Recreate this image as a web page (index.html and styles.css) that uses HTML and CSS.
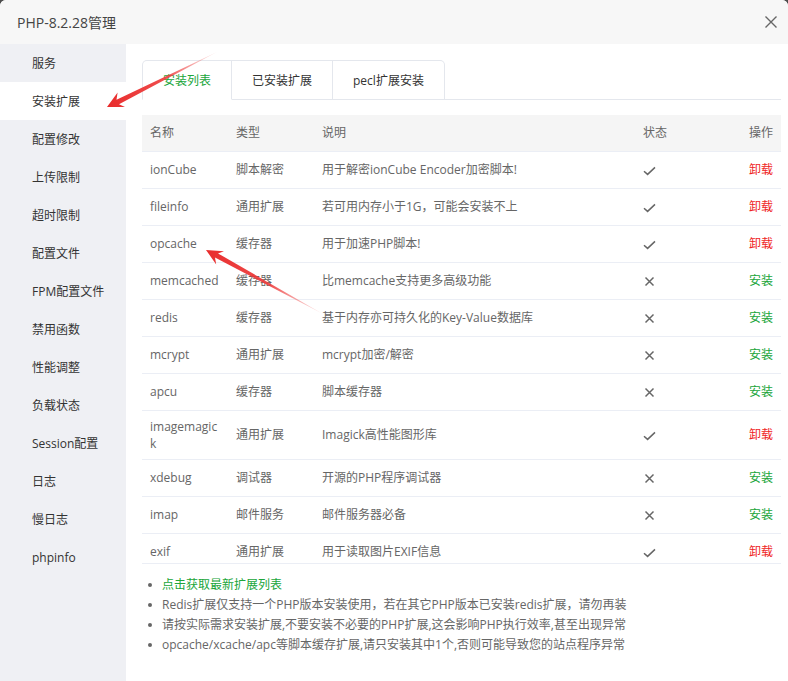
FILE: index.html
```html
<!DOCTYPE html>
<html lang="zh-CN">
<head>
<meta charset="utf-8">
<title>PHP-8.2.28管理</title>
<link rel="stylesheet" href="styles.css">
</head>
<body>
<div class="dialog">
  <header class="dlg-head">
    <span class="dlg-title">PHP-8.2.28管理</span>
    <button class="dlg-close" aria-label="关闭">
      <svg width="14" height="14" viewBox="0 0 14 14"><path d="M1.5 1.5 L12.5 12.5 M12.5 1.5 L1.5 12.5" stroke="#666" stroke-width="1.4" fill="none"/></svg>
    </button>
  </header>
  <div class="dlg-body">
    <nav class="side">
      <a class="side-item">服务</a>
      <a class="side-item active">安装扩展</a>
      <a class="side-item">配置修改</a>
      <a class="side-item">上传限制</a>
      <a class="side-item">超时限制</a>
      <a class="side-item">配置文件</a>
      <a class="side-item">FPM配置文件</a>
      <a class="side-item">禁用函数</a>
      <a class="side-item">性能调整</a>
      <a class="side-item">负载状态</a>
      <a class="side-item">Session配置</a>
      <a class="side-item">日志</a>
      <a class="side-item">慢日志</a>
      <a class="side-item">phpinfo</a>
    </nav>
    <main class="content">
      <div class="tabs">
        <span class="tab active">安装列表</span>
        <span class="tab">已安装扩展</span>
        <span class="tab">pecl扩展安装</span>
        <span class="tabs-fill"></span>
      </div>
      <div class="table-wrap">
        <table class="ext-table">
          <colgroup>
            <col class="c-name"><col class="c-type"><col class="c-desc"><col class="c-state"><col class="c-op">
          </colgroup>
          <thead>
            <tr><th>名称</th><th>类型</th><th>说明</th><th>状态</th><th class="op">操作</th></tr>
          </thead>
          <tbody>
            <tr><td>ionCube</td><td>脚本解密</td><td>用于解密ionCube Encoder加密脚本!</td><td><i class="ok"></i></td><td class="op"><a class="del">卸载</a></td></tr>
            <tr><td>fileinfo</td><td>通用扩展</td><td>若可用内存小于1G，可能会安装不上</td><td><i class="ok"></i></td><td class="op"><a class="del">卸载</a></td></tr>
            <tr><td>opcache</td><td>缓存器</td><td>用于加速PHP脚本!</td><td><i class="ok"></i></td><td class="op"><a class="del">卸载</a></td></tr>
            <tr><td>memcached</td><td>缓存器</td><td>比memcache支持更多高级功能</td><td><i class="no"></i></td><td class="op"><a class="add">安装</a></td></tr>
            <tr><td>redis</td><td>缓存器</td><td>基于内存亦可持久化的Key-Value数据库</td><td><i class="no"></i></td><td class="op"><a class="add">安装</a></td></tr>
            <tr><td>mcrypt</td><td>通用扩展</td><td>mcrypt加密/解密</td><td><i class="no"></i></td><td class="op"><a class="add">安装</a></td></tr>
            <tr><td>apcu</td><td>缓存器</td><td>脚本缓存器</td><td><i class="no"></i></td><td class="op"><a class="add">安装</a></td></tr>
            <tr><td>imagemagick</td><td>通用扩展</td><td>Imagick高性能图形库</td><td><i class="ok"></i></td><td class="op"><a class="del">卸载</a></td></tr>
            <tr><td>xdebug</td><td>调试器</td><td>开源的PHP程序调试器</td><td><i class="no"></i></td><td class="op"><a class="add">安装</a></td></tr>
            <tr><td>imap</td><td>邮件服务</td><td>邮件服务器必备</td><td><i class="no"></i></td><td class="op"><a class="add">安装</a></td></tr>
            <tr><td>exif</td><td>通用扩展</td><td>用于读取图片EXIF信息</td><td><i class="ok"></i></td><td class="op"><a class="del">卸载</a></td></tr>
          </tbody>
        </table>
      </div>
      <ul class="notes">
        <li class="link">点击获取最新扩展列表</li>
        <li>Redis扩展仅支持一个PHP版本安装使用，若在其它PHP版本已安装redis扩展，请勿再装</li>
        <li>请按实际需求安装扩展,不要安装不必要的PHP扩展,这会影响PHP执行效率,甚至出现异常</li>
        <li>opcache/xcache/apc等脚本缓存扩展,请只安装其中1个,否则可能导致您的站点程序异常</li>
      </ul>
    </main>
  </div>
  <!-- red annotation arrows drawn over the dialog -->
  <svg class="marks" width="788" height="681" viewBox="0 0 788 681">
    <defs>
      <linearGradient id="arrowA" gradientUnits="userSpaceOnUse" x1="217" y1="52" x2="107" y2="107">
        <stop offset="0" stop-color="#f07070" stop-opacity="0.15"/>
        <stop offset="0.45" stop-color="#ee3b3b" stop-opacity="0.9"/>
        <stop offset="1" stop-color="#e82c2c"/>
      </linearGradient>
      <linearGradient id="arrowB" gradientUnits="userSpaceOnUse" x1="323" y1="314" x2="206" y2="250">
        <stop offset="0" stop-color="#f07070" stop-opacity="0.15"/>
        <stop offset="0.45" stop-color="#ee3b3b" stop-opacity="0.9"/>
        <stop offset="1" stop-color="#e82c2c"/>
      </linearGradient>
    </defs>
    <polygon fill="url(#arrowA)" points="217,52 119.0,104.2 125.0,107.0 107,107 117.6,92.6 116.5,99.8"/>
    <polygon fill="url(#arrowB)" points="323,314 218.0,253.4 224.0,251.2 206,250 216.2,264.4 215.0,257.6"/>
  </svg>
</div>
</body>
</html>
```
FILE: styles.css
```css
* { box-sizing: border-box; }

html, body {
  margin: 0;
  height: 100%;
}

body {
  background: #4d4d4d;
  font-family: "Open Sans", "Noto Sans CJK SC", sans-serif;
  font-size: 12px;
  color: #666;
}

.dialog {
  position: relative;
  width: 788px;
  height: 681px;
  background: #fff;
  border-radius: 6px 6px 0 0;
  overflow: hidden;
  display: flex;
  flex-direction: column;
}

/* title bar */
.dlg-head {
  height: 44px;
  flex: none;
  display: flex;
  align-items: center;
  justify-content: space-between;
  padding: 0 10px 0 17px;
  background: #f7f7f7;
}

.dlg-title {
  font-size: 14px;
  color: #444;
}

.dlg-close {
  border: 0;
  background: none;
  padding: 0;
  width: 14px;
  height: 14px;
  display: flex;
}

.dlg-body {
  flex: 1;
  display: flex;
  min-height: 0;
}

/* left menu */
.side {
  width: 126px;
  flex: none;
  background: #eff0f4;
  display: flex;
  flex-direction: column;
}

.side-item {
  height: 38px;
  line-height: 36px;
  padding: 2px 0 0 32px;
  color: #333;
  font-size: 12px;
}

.side-item.active {
  background: #fff;
}

/* main panel */
.content {
  flex: 1;
  padding: 16px 7px 0 16px;
  min-width: 0;
}

.tabs {
  display: flex;
  height: 40px;
}

.tab {
  height: 40px;
  line-height: 40px;
  padding: 0 20px;
  border: 1px solid #e4e7ed;
  border-left: 0;
  color: #333;
  font-size: 12px;
}

.tab:first-child {
  border-left: 1px solid #e4e7ed;
  border-top-left-radius: 5px;
}

.tab:nth-child(3) {
  border-top-right-radius: 5px;
}

.tab.active {
  color: #20a53a;
  border-bottom-color: transparent;
}

.tabs-fill {
  flex: 1;
  border-bottom: 1px solid #e4e7ed;
}

.table-wrap {
  margin-top: 15px;
  height: 449px;
  overflow: hidden;
  border-bottom: 1px solid #ebeef5;
}

.ext-table {
  width: 100%;
  border-collapse: collapse;
  table-layout: fixed;
}

.c-name, .c-type { width: 86px; }
.c-desc { width: 321px; }
.c-state { width: 80px; }

.ext-table th,
.ext-table td {
  height: 37px;
  padding: 7px 8px;
  line-height: 17px;
  text-align: left;
  font-weight: normal;
  color: #666;
  border-bottom: 1px solid #ebeef5;
  word-break: break-all;
  vertical-align: middle;
}

.ext-table th {
  background: #f5f5f5;
  height: 36px;
}

.ext-table .op { text-align: right; }

.del { color: #ef1f1f; }
.add { color: #20a53a; }

/* state marks */
.ok, .no {
  display: inline-block;
  width: 13px;
  height: 12px;
  vertical-align: middle;
  background-repeat: no-repeat;
  background-position: center;
}

.ok {
  background-image: url("data:image/svg+xml,%3Csvg xmlns='http://www.w3.org/2000/svg' width='13' height='12' viewBox='0 0 13 12'%3E%3Cpath d='M1 6.2 L4.6 9.4 L12 2.4' stroke='%23666' stroke-width='1.5' fill='none'/%3E%3C/svg%3E");
}

.no {
  background-image: url("data:image/svg+xml,%3Csvg xmlns='http://www.w3.org/2000/svg' width='13' height='12' viewBox='0 0 13 12'%3E%3Cpath d='M2.5 1.5 L10.5 9.5 M10.5 1.5 L2.5 9.5' stroke='%23666' stroke-width='1.5' fill='none'/%3E%3C/svg%3E");
}

/* tips under the table */
.notes {
  list-style: none;
  margin: 11px 0 0;
  padding: 0;
}

.notes li {
  line-height: 20px;
  color: #666;
  display: flex;
  align-items: center;
}

.notes li::before {
  content: "";
  width: 4px;
  height: 4px;
  border-radius: 50%;
  background: #666;
  margin: 0 10px 0 6px;
  flex: none;
}

.notes li.link { color: #20a53a; }

.marks {
  position: absolute;
  left: 0;
  top: 0;
  pointer-events: none;
}
```
